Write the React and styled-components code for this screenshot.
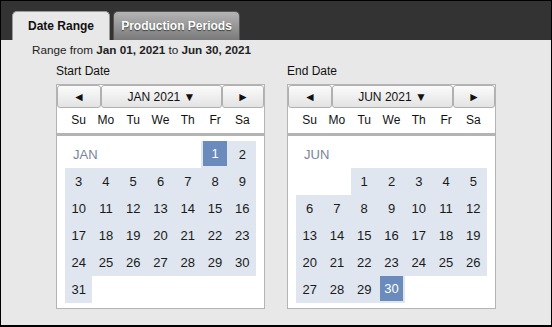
import styled, { createGlobalStyle } from "styled-components";

const GlobalStyle = createGlobalStyle`
  body {
    margin: 0;
    font-family: "Liberation Sans", "DejaVu Sans", sans-serif;
  }
`;

const Frame = styled.div`
  width: 552px;
  height: 327px;
  box-sizing: border-box;
  border: 1px solid #000;
  border-bottom-width: 2px;
  background: #e8e8e8;
  display: flex;
  flex-direction: column;
`;

const TabBar = styled.div`
  height: 39px;
  background: #333333;
  display: flex;
  align-items: flex-end;
  padding-left: 11px;
  gap: 3px;
`;

const Tab = styled.div`
  height: 29px;
  width: ${p => p.w}px;
  box-sizing: border-box;
  border-radius: 5px 5px 0 0;
  display: flex;
  align-items: center;
  justify-content: center;
  white-space: nowrap;
  font-size: 12px;
  font-weight: 700;
  color: ${p => (p.active ? "#111" : "#fff")};
  text-shadow: ${p => (p.active ? "none" : "0 1px 1px rgba(0,0,0,0.6)")};
  background: ${p =>
    p.active ? "#e8e8e8" : "linear-gradient(#b4b4b4, #7a7a7a)"};
  border: 1px solid ${p => (p.active ? "#9a9a9a" : "#555")};
  border-bottom: none;
`;

const Content = styled.div`
  padding: 2px 0 0 31px;
`;

const RangeLine = styled.div`
  font-size: 11.7px;
  color: #222;
  line-height: 15px;
  b {
    font-weight: 700;
  }
`;

const Columns = styled.div`
  display: flex;
  gap: 22px;
  padding-left: 24px;
  margin-top: 6px;
`;

const Column = styled.div`
  display: flex;
  flex-direction: column;
`;

const ColLabel = styled.div`
  font-size: 12px;
  color: #111;
  height: 16px;
  line-height: 16px;
  margin-bottom: 5px;
`;

const CalBox = styled.div`
  width: 209px;
  box-sizing: border-box;
  border: 1px solid #b4b4b4;
  background: #fff;
`;

const NavRow = styled.div`
  display: flex;
  height: 23px;
`;

const NavButton = styled.div`
  width: ${p => p.w}px;
  box-sizing: border-box;
  background: linear-gradient(#fbfbfb, #e3e3e3);
  border: 1px solid #b0b0b0;
  border-radius: 3px;
  display: flex;
  align-items: center;
  justify-content: center;
  font-size: 12px;
  color: #111;
`;

const DayNames = styled.div`
  display: grid;
  grid-template-columns: repeat(7, 1fr);
  width: 191px;
  margin-left: 8px;
  height: 23px;
  align-items: center;
  font-size: 12px;
  color: #111;
  text-align: center;
`;

const Separator = styled.div`
  height: 3px;
  background: #b4b4b4;
  margin-top: 2px;
`;

const DayGrid = styled.div`
  display: grid;
  grid-template-columns: repeat(7, 1fr);
  grid-auto-rows: 27px;
  width: 191px;
  margin: 5px 0 5px 8px;
  height: 162px;
  align-content: start;
`;

const MonthLabel = styled.div`
  grid-column: span ${p => p.span};
  font-size: 13px;
  color: #7a8494;
  display: flex;
  align-items: center;
  padding-left: 8px;
`;

const Cell = styled.div`
  background: ${p => (p.empty ? "transparent" : "#dfe6ef")};
  font-size: 13px;
  color: #1a1a1a;
  display: flex;
  align-items: center;
  justify-content: center;
`;

const Selected = styled.span`
  margin: 0 2px 2px 2px;
  align-self: stretch;
  flex: 1;
  background: #6a8bbc;
  color: #fff;
  display: flex;
  align-items: center;
  justify-content: center;
`;

function Calendar({ title, month, startDay, days, selected }) {
  const labelOwnRow = startDay < 3;
  const cells = [];
  if (labelOwnRow) {
    cells.push(<MonthLabel key="l" span={7}>{month}</MonthLabel>);
    for (let i = 0; i < startDay; i++) cells.push(<Cell key={"e" + i} empty />);
  } else {
    cells.push(<MonthLabel key="l" span={startDay}>{month}</MonthLabel>);
  }
  for (let d = 1; d <= days; d++) {
    cells.push(
      <Cell key={d}>
        {d === selected ? <Selected>{d}</Selected> : d}
      </Cell>
    );
  }
  return (
    <Column>
      <ColLabel>{title}</ColLabel>
      <CalBox>
        <NavRow>
          <NavButton w={44}>◄</NavButton>
          <NavButton w={121}>{month} 2021 ▼</NavButton>
          <NavButton w={42}>►</NavButton>
        </NavRow>
        <DayNames>
          {["Su", "Mo", "Tu", "We", "Th", "Fr", "Sa"].map(n => (
            <span key={n}>{n}</span>
          ))}
        </DayNames>
        <Separator />
        <DayGrid>{cells}</DayGrid>
      </CalBox>
    </Column>
  );
}

export default function App() {
  return (
    <>
      <GlobalStyle />
      <Frame>
        <TabBar>
          <Tab active w={98}>Date Range</Tab>
          <Tab w={127}>Production Periods</Tab>
        </TabBar>
        <Content>
          <RangeLine>
            Range from <b>Jan 01, 2021</b> to <b>Jun 30, 2021</b>
          </RangeLine>
          <Columns>
            <Calendar title="Start Date" month="JAN" startDay={5} days={31} selected={1} />
            <Calendar title="End Date" month="JUN" startDay={2} days={30} selected={30} />
          </Columns>
        </Content>
      </Frame>
    </>
  );
}
